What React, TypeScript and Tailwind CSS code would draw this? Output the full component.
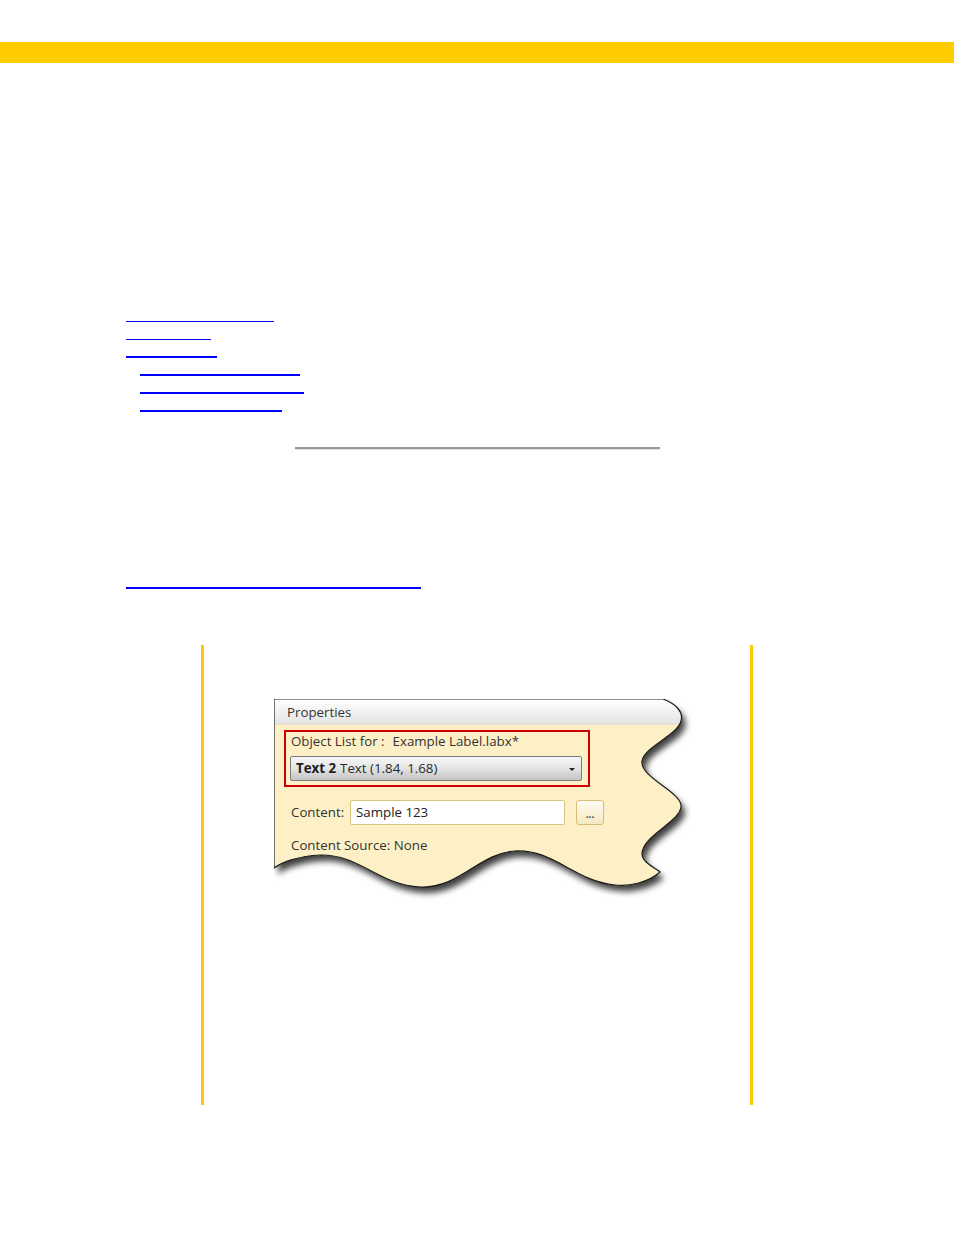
const tocLinks = [
  { width: 148, indent: 0, thick: 1 },
  { width: 85, indent: 0, thick: 1 },
  { width: 91, indent: 0, thick: 2 },
  { width: 160, indent: 14, thick: 2 },
  { width: 164, indent: 14, thick: 2 },
  { width: 142, indent: 14, thick: 2 },
];

const outline =
  "M0,0 H389 C400,4 410,12 407,22 C404,36 370,48 368,62 C366,78 405,92 407,106 C409,122 368,136 368,155 C368,163 380,168 386,173 C375,183 355,188 341,186 C300,182 280,150 241,152 C205,154 185,190 146,188 C105,186 85,155 46,156 C25,157 8,163 0,169 Z";

const PanelShape = () => (
  <svg className="absolute left-0 top-0" width="430" height="205" viewBox="0 0 430 205">
    <defs>
      <filter id="panelShadow" x="-5%" y="-5%" width="115%" height="125%">
        <feDropShadow dx="4" dy="6" stdDeviation="3" floodColor="#000" floodOpacity="0.75" />
      </filter>
      <clipPath id="panelClip">
        <path d={outline} />
      </clipPath>
      <linearGradient id="headerGrad" x1="0" y1="0" x2="0" y2="1">
        <stop offset="0" stopColor="#ffffff" />
        <stop offset="1" stopColor="#e4e4e4" />
      </linearGradient>
    </defs>
    <path d={outline} fill="#fdf0c6" filter="url(#panelShadow)" />
    <g clipPath="url(#panelClip)">
      <rect x="0" y="0" width="430" height="25" fill="url(#headerGrad)" />
      <line x1="0" y1="25" x2="430" y2="25" stroke="#d8d8d8" strokeWidth="1" />
    </g>
    <path d={outline} fill="none" stroke="#1a1a1a" strokeWidth="1.2" />
  </svg>
);

const PropertiesFigure = () => (
  <div className="relative w-[430px] h-[205px] text-[13.3px] text-[#333] [font-family:'Open_Sans','Noto_Sans',sans-serif]">
    <PanelShape />
    <div className="relative flex flex-col">
      <div className="h-[25px] pl-[13px] pt-[2px] flex items-center">Properties</div>
      <div className="mt-[6px] ml-[10px] w-[306px] h-[57px] border-2 border-[#d10000] flex flex-col">
        <div className="h-[18px] pl-[5px] pt-[1px] flex items-center">
          <span>Object List for :</span>
          <span className="ml-[8px]">Example Label.labx*</span>
        </div>
        <div className="mt-[6px] ml-[4px] w-[292px] h-[25px] rounded-[2px] border border-[#7c7c7c] bg-gradient-to-b from-[#f8f8f8] via-[#e3e3e3] to-[#c4c4c4] flex items-center pl-[5px] pr-[6px] pt-[1px]">
          <span className="font-bold text-[#1e1e1e]">Text 2</span>
          <span className="ml-[4px] text-[#2a2a2a]">Text (1.84, 1.68)</span>
          <span className="ml-auto w-0 h-0 border-l-[3px] border-r-[3px] border-t-[3px] border-l-transparent border-r-transparent border-t-[#222]" />
        </div>
      </div>
      <div className="mt-[13px] h-[25px] flex items-center">
        <span className="ml-[17px] w-[59px] pt-[1px]">Content:</span>
        <div className="w-[215px] h-[25px] rounded-[2px] border border-[#d8c27f] bg-white flex items-center pl-[5px] pt-[1px] text-[#222]">
          Sample 123
        </div>
        <div className="ml-[11px] w-[28px] h-[25px] rounded-[3px] border border-[#d6be78] bg-gradient-to-b from-[#fffbf0] to-[#f5e8c2] flex items-center justify-center pt-[3px] text-[10px] font-bold leading-none text-[#444]">
          ...
        </div>
      </div>
      <div className="mt-[10px] h-[20px] pl-[17px] pt-[1px] flex items-center">Content Source: None</div>
    </div>
  </div>
);

export default function App() {
  return (
    <div className="w-full min-h-[1235px] bg-white flex flex-col">
      <div className="mt-[42px] h-[21px] bg-[#ffcc00]" />

      <nav className="mt-[242px] pl-[126px] flex flex-col">
        {tocLinks.map((link, i) => (
          <div key={i} className="h-[18px] flex items-end">
            <div
              className={`bg-[#0000ff] ${link.thick === 2 ? "h-[2px] mb-[1px]" : "h-[1px] mb-[1px]"} ${link.indent ? "ml-[14px]" : ""}`}
              style={{ width: link.width }}
            />
          </div>
        ))}
      </nav>

      <div className="mt-[34px] mx-auto w-[365px] flex flex-col">
        <div className="h-[2px] bg-[#9a9a9a]" />
        <div className="h-[1px] bg-[#e2e2e2]" />
      </div>

      <div className="mt-[137px] ml-[126px] w-[295px] h-[2px] bg-[#0000ff]" />

      <div className="mt-[56px] mx-auto w-[552px] h-[460px] border-l-[3px] border-r-[3px] border-[#fdc800] pt-[54px] pl-[70px]">
        <PropertiesFigure />
      </div>
    </div>
  );
}
